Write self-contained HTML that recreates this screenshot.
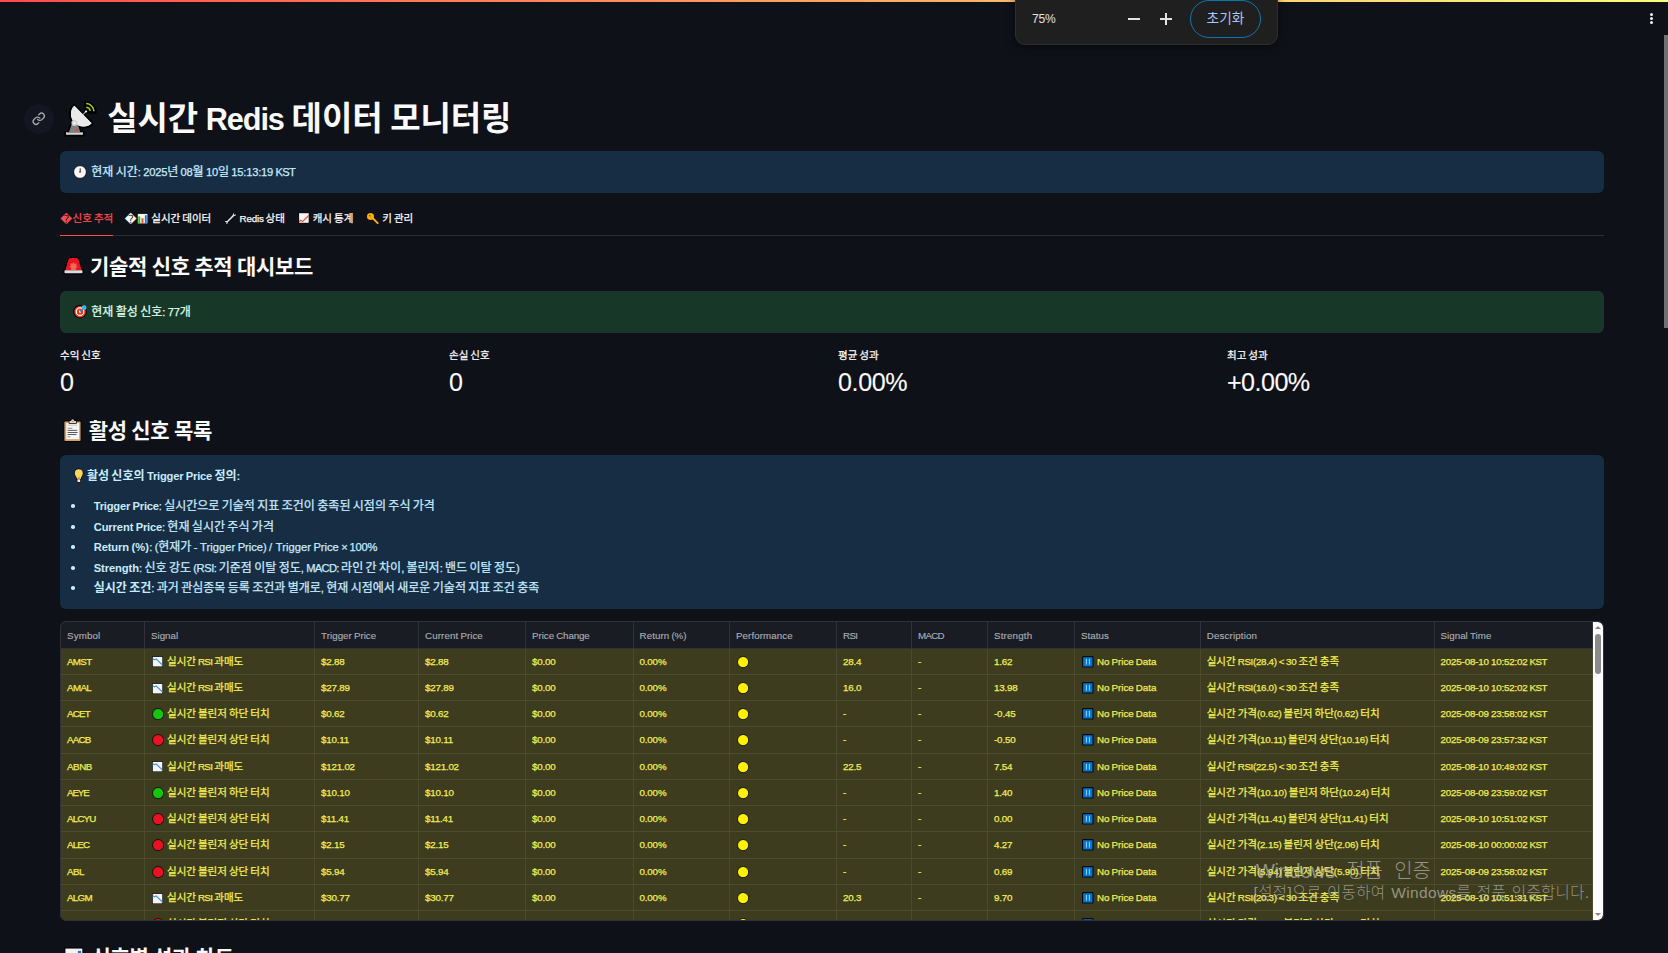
<!DOCTYPE html>
<html lang="ko"><head><meta charset="utf-8"><title>실시간 Redis 데이터 모니터링</title>
<style>
*{box-sizing:border-box;margin:0;padding:0}
html,body{width:1668px;height:953px;overflow:hidden;background:#0e1117}
body{position:relative;word-spacing:-.078em;-webkit-text-stroke:.25px currentColor;color:#fafafa;font-family:"Liberation Sans","Noto Sans CJK KR",sans-serif;font-size:12px;-webkit-font-smoothing:antialiased}
.abs{position:absolute;white-space:nowrap}
.l{font-size:.93em;word-spacing:0}
svg.ic{position:relative;display:inline-block;vertical-align:middle;overflow:visible}
svg.at{position:absolute;display:block;overflow:visible}
.t12{font-size:12px;line-height:18px}
.q{font-family:"DejaVu Sans",sans-serif;font-size:11.500px;line-height:10px;position:relative;top:1.100px;margin-left:.3px;margin-right:.5px;-webkit-text-stroke:0}
#topbar{position:absolute;left:0;top:0;width:1668px;height:2px;background:linear-gradient(90deg,#ff4b4b 0%,#fffd80 100%)}
#zoom{position:absolute;left:1015px;top:-10px;width:263px;height:54.800px;background:#1f1f1f;border:1px solid #2e2e2e;border-radius:10px;box-shadow:0 2px 8px rgba(0,0,0,.5);-webkit-text-stroke:0;word-spacing:0}
#zoom .pct{position:absolute;left:16px;top:10.400px;height:37px;line-height:37px;font-size:12px;color:#e3e3e3;letter-spacing:-.2px}
#zoom .minus{position:absolute;left:112px;top:27.100px;width:12.200px;height:1.600px;background:#e3e3e3}
#zoom .plusH{position:absolute;left:144.100px;top:27.100px;width:12.200px;height:1.600px;background:#e3e3e3}
#zoom .plusV{position:absolute;left:149.400px;top:21.800px;width:1.600px;height:12.200px;background:#e3e3e3}
#zoom .btn{position:absolute;left:174.200px;top:9.300px;width:70.600px;height:37.600px;border:1.500px solid #0a78b0;border-radius:19px;color:#a8c7fa;font-size:13.700px;line-height:36.300px;text-align:center}
#menu i{position:absolute;left:1650px;width:3px;height:3px;border-radius:50%;background:#f0f0f0}
#scroll{position:absolute;left:1664px;top:35px;width:4px;height:292.500px;background:#707175}
#link{position:absolute;left:24px;top:104px;width:30px;height:30px;border-radius:50%;background:#141721}
h1{-webkit-text-stroke:0;position:absolute;left:107.200px;top:98px;font-size:33px;line-height:42px;font-weight:700;white-space:nowrap;word-spacing:-.04em;letter-spacing:-.08px}
h3{position:absolute;font-size:21px;line-height:28px;font-weight:700;white-space:nowrap;letter-spacing:-.3px;-webkit-text-stroke:0}
.box{position:absolute;left:60px;width:1544px;border-radius:6px}
.info{background:#172d43;color:#c7ebff}
.succ{background:#173828;color:#dffde9}
.tab{position:absolute;top:210px;height:16px;line-height:16px;font-size:10.5px;white-space:nowrap}
#tabline{position:absolute;left:60px;top:235px;width:1544px;height:1px;background:#2b2d34}
#tabred{position:absolute;left:60px;top:234.600px;width:53px;height:1.500px;background:#ff4b4b}
.ml{position:absolute;top:348px;font-size:10.5px;line-height:14px;white-space:nowrap}
.mv{position:absolute;top:367.400px;font-size:27px;line-height:30px;white-space:nowrap;-webkit-text-stroke:.1px currentColor}
ul{list-style:none}
.li{position:absolute;left:93.700px;height:20px;line-height:20px;white-space:nowrap}
.dot{position:absolute;left:71px;width:3.600px;height:3.600px;border-radius:50%;background:#c7ebff}
b{font-weight:700;-webkit-text-stroke:0}
/* table */
#tbl{position:absolute;left:60px;top:621px;width:1544px;height:300px;border:1px solid #30323a;border-radius:6px;overflow:hidden;background:#3d3c1f}
#tbl .in{position:absolute;left:0;top:0;width:1542px;height:298px;overflow:hidden}
.tr{position:absolute;left:0;width:1533px;height:26.250px;border-bottom:1px solid #4d4c30;color:#f2ee52;font-size:10.500px}
.tr.th{background:#1a1c24;color:#adafb4;border-bottom:1px solid #30323a}
.c{position:absolute;top:0;height:100%;line-height:25.600px;padding-left:6px;border-right:1px solid #4b4a2e;white-space:nowrap;overflow:hidden}
.th .c{border-right:1px solid #30323a;line-height:26.300px;-webkit-text-stroke:.12px currentColor}
.ei{display:inline-block;width:16px;vertical-align:top}
.ei svg{left:1px;top:-1.800px}
#vs{position:absolute;left:1531.800px;top:0;width:10.400px;height:298px;background:#fcfcfc;border-radius:0 5.500px 5.500px 0}
#vs .thumb{position:absolute;left:2.300px;top:11.900px;width:5.900px;height:40px;border-radius:3px;background:#8b8b8b}
#vs .au{position:absolute;left:2.100px;top:4px;width:0;height:0;border-left:3.100px solid transparent;border-right:3.100px solid transparent;border-bottom:3.300px solid #858585}
#vs .ad{position:absolute;left:2.100px;top:291px;width:0;height:0;border-left:3.100px solid transparent;border-right:3.100px solid transparent;border-top:3.300px solid #858585}
.wm{position:absolute;color:rgba(195,195,190,.66);white-space:nowrap;font-weight:300;-webkit-text-stroke:0}
.wm .l{font-size:1em}

</style></head>
<body>
<div id="topbar"></div>
<div id="zoom"><span class="pct">75%</span><i class="minus"></i><i class="plusH"></i><i class="plusV"></i><div class="btn">초기화</div></div>
<div id="menu"><i style="top:13.300px"></i><i style="top:17.100px"></i><i style="top:20.900px"></i></div>
<div id="scroll"></div>
<div id="link"></div><svg class="at" width="13.5" height="13.5" viewBox="0 0 13.5 13.5" style="left:32.0px;top:112.0px"><g transform="scale(.5625)" fill="none" stroke="#a6a8ae" stroke-width="2.300" stroke-linecap="round" stroke-linejoin="round"><path d="M10 13a5 5 0 0 0 7.540.540l3-3a5 5 0 0 0-7.070-7.070l-1.720 1.710"/><path d="M14 11a5 5 0 0 0-7.540-.540l-3 3a5 5 0 0 0 7.070 7.070l1.710-1.710"/></g></svg>
<svg class="at" width="33" height="36" viewBox="0 0 33 36" style="left:64.0px;top:101.0px"><path d="M21.600 11.200L21.200 1A9.800 9.800 0 0 1 31.600 11.600z" fill="#000" stroke="#000" stroke-width="2.200" stroke-linejoin="round"/><g stroke="#000" stroke-width="4" stroke-linejoin="round" paint-order="stroke"><rect x="2.200" y="31.400" width="16.500" height="2.200" fill="#d6d6d6"/><path d="M7.700 23.700h6.400l1.900 7.700H5z" fill="#7f7f7f"/><path d="M10.300 4.800A12.300 11.600 45 0 0 27.600 22.300z" fill="#e9e9e9"/></g><rect x="2.200" y="31.400" width="16.500" height="2.200" fill="#d6d6d6"/><path d="M7.700 23.700h6.400l1.900 7.700H5z" fill="#7f7f7f"/><path d="M10.300 4.800A12.300 11.600 45 0 0 27.600 22.300z" fill="#e9e9e9"/><circle cx="10.400" cy="22" r="3" fill="#d2d2d2"/><circle cx="10.400" cy="22" r="1.200" fill="#f4f4f4"/><path d="M19 13.400l3-2.900" stroke="#f2f2f2" stroke-width="1"/><circle cx="22" cy="10.500" r="1.100" fill="#f6f6f6"/><rect x="11.700" y="28" width="2" height="2" fill="#ff3b1f"/><g fill="none" stroke="#b4d200" stroke-width="1.500"><path d="M22.300 6.200a4.300 4.300 0 0 1 3.900 3.600"/><path d="M22.300 2.600a8 8 0 0 1 7.600 7.600"/></g></svg>
<h1>실시간 <span class="l"><span style="letter-spacing:-1.11px">Redis</span></span> 데이터 모니터링</h1>

<div class="box info" style="top:151px;height:42px"></div>
<svg class="at" width="14" height="14" viewBox="0 0 14 14" style="left:73.2px;top:164.8px"><circle cx="7" cy="7" r="6.400" fill="#fbfbfb" stroke="#05070a" stroke-width=".9"/><path d="M7.200 6.500V3.700" stroke="#3a3f44" stroke-width="1.150" stroke-linecap="round"/><circle cx="7" cy="6.900" r=".95" fill="#f0182a"/></svg>
<div class="abs t12" style="left:91.300px;top:163.100px;color:#c7ebff">현재 시간<span class="l"><span style="letter-spacing:-0.11px">:</span><span style="letter-spacing:-0.70px"> </span><span style="letter-spacing:-0.24px">2025</span></span>년 <span class="l"><span style="letter-spacing:-0.24px">08</span></span>월 <span class="l"><span style="letter-spacing:-0.24px">10</span></span>일 <span class="l"><span style="letter-spacing:-0.21px">15:13:19</span><span style="letter-spacing:-0.70px"> </span><span style="letter-spacing:-0.64px">KST</span></span></div>

<div class="tab" style="left:60px;color:#ff4b4b"><span class="q">&#xFFFD;</span>신호 추적</div>
<div class="tab" style="left:124.500px"><span class="q">&#xFFFD;</span></div><svg class="at" width="11" height="11.1" viewBox="0 0 11 11.1" style="left:136.5px;top:212.5px"><rect x="0" y="0" width="11" height="11.100" rx=".9" fill="#06080c"/><rect x=".8" y=".9" width="9.600" height="9.500" fill="#f4f4f4"/><rect x="1.300" y="3.400" width="1.900" height="7" fill="#16c60c"/><rect x="4.500" y="5.200" width="1.900" height="5.200" fill="#f25530"/><rect x="7.900" y="2.200" width="1.800" height="8.200" fill="#0a78dc"/></svg>
<div class="tab" style="left:151.300px">실시간 데이터</div>
<svg class="at" width="11" height="11" viewBox="0 0 11 11" style="left:224.8px;top:212.8px"><g fill="none" stroke-linecap="round" stroke-linejoin="round"><g stroke="#05070a"><path d="M2.300 8.700L8.400 2.600" stroke-width="2.700"/><path d="M8.500.700L8.300 2.700 10.500 1.900M.400 8.500L2.400 8.600 1.800 10.700" stroke-width="2.200"/></g><g stroke="#e2e2e2"><path d="M2.300 8.700L8.400 2.600" stroke-width="1.500"/><path d="M8.500.700L8.300 2.700 10.500 1.900M.400 8.500L2.400 8.600 1.800 10.700" stroke-width="1.100"/></g></g></svg><div class="tab" style="left:239.600px"><span class="l"><span style="letter-spacing:-0.19px">Redis</span></span> 상태</div>
<svg class="at" width="11.5" height="11.9" viewBox="0 0 11.5 11.9" style="left:298.1px;top:212.1px"><rect x=".4" y=".4" width="10.700" height="11.100" rx=".9" fill="#06080c"/><rect x="1.100" y="1.200" width="9.600" height="9.600" fill="#f6f6f6"/><path d="M1.100 9.700l1.700-1.500 1.700 1.400 6.200-6.100" fill="none" stroke="#f0502f" stroke-width="1.200" stroke-linejoin="round"/></svg><div class="tab" style="left:312.700px">캐시 통계</div>
<svg class="at" width="11.5" height="11.5" viewBox="0 0 11.5 11.5" style="left:367.0px;top:212.7px"><g stroke="#06080c" stroke-width="1" paint-order="stroke"><path d="M5.300 4.700L10.900 10.300" stroke="#06080c" stroke-width="3" stroke-linecap="round"/><circle cx="3.500" cy="3.500" r="3.300" fill="#ffb000"/></g><path d="M5.300 4.700L10.700 10.100" stroke="#ffb000" stroke-width="2" stroke-linecap="round"/><circle cx="3.500" cy="3.500" r="3.300" fill="#ffb000"/><ellipse cx="2.900" cy="2.800" rx=".8" ry=".55" fill="#0b0d12"/></svg><div class="tab" style="left:382.300px">키 관리</div>
<div id="tabline"></div><div id="tabred"></div>

<svg class="at" width="21" height="19" viewBox="0 0 21 19" style="left:62.5px;top:256.4px"><g stroke="#000" stroke-width="2.400" stroke-linejoin="round" fill="#000"><path d="M2.300 14.300L5.400 3.700Q6 2 7.800 2h5.400q1.800 0 2.400 1.700l3.100 10.600z"/><rect x="1.500" y="14.200" width="18" height="3.100" rx=".7"/></g><path d="M2.300 14.300L5.400 3.700Q6 2 7.800 2h5.400q1.800 0 2.400 1.700l3.100 10.600z" fill="#ea1324"/><rect x="1.500" y="14.200" width="18" height="3.100" rx=".7" fill="#dcdcdc"/><path d="M10.500 5.900l1.100 1.900 2.200-.3-.7 2.100 1.700 1.300-1.900.9.100 2.400h-5l.1-2.400-1.900-.9 1.700-1.300-.7-2.100 2.200.3z" fill="#ee6a50"/></svg>
<h3 style="left:90px;top:253px">기술적 신호 추적 대시보드</h3>

<div class="box succ" style="top:291px;height:42px"></div>
<svg class="at" width="14.7" height="14.7" viewBox="0 0 14 14" style="left:72.9px;top:304.0px"><circle cx="6.700" cy="7.300" r="6" fill="#f03a17" stroke="#050505" stroke-width="1.100"/><circle cx="6.700" cy="7.300" r="3.600" fill="none" stroke="#fff" stroke-width="1.100"/><circle cx="6.700" cy="7.300" r="1" fill="#fff"/><path d="M6.800 7.200l3-3" stroke="#1e86e5" stroke-width="1.100"/><circle cx="10.500" cy="3.500" r="2.300" fill="#38c6f6"/><path d="M9.200 4.800l2.300-2.300" stroke="#1e86e5" stroke-width=".9"/></svg>
<div class="abs t12" style="left:91.300px;top:303.100px;color:#dffde9">현재 활성 신호<span class="l"><span style="letter-spacing:-0.11px">:</span><span style="letter-spacing:-0.70px"> </span><span style="letter-spacing:-0.24px">77</span></span>개</div>

<div class="ml" style="left:60px">수익 신호</div><div class="mv" style="left:60px"><span class="l"><span style="letter-spacing:-0.55px">0</span></span></div>
<div class="ml" style="left:449px">손실 신호</div><div class="mv" style="left:449px"><span class="l"><span style="letter-spacing:-0.55px">0</span></span></div>
<div class="ml" style="left:838px">평균 성과</div><div class="mv" style="left:838px"><span class="l"><span style="letter-spacing:-0.39px">0.00%</span></span></div>
<div class="ml" style="left:1227px">최고 성과</div><div class="mv" style="left:1227px"><span class="l"><span style="letter-spacing:-0.54px">+0.00%</span></span></div>

<svg class="at" width="19" height="24" viewBox="0 0 19 24" style="left:62.7px;top:418.4px"><rect x="1.400" y="3.400" width="16.200" height="19.500" rx="1" fill="#d7a066" stroke="#000" stroke-width="1.600" paint-order="stroke"/><rect x="3.200" y="5" width="13" height="16.200" fill="#f6f6f6"/><path d="M6.400 5V3.500q0-.5.500-.5h1.200q.2-1.700 1.600-1.700t1.600 1.700h1.200q.5 0 .5.500V5z" fill="#d9d9d9" stroke="#000" stroke-width="1.400" paint-order="stroke"/><circle cx="9.700" cy="3.500" r=".8" fill="#e08a2a"/><path d="M4.600 7.200h9.800" stroke="#d0d0d0" stroke-width="1.300"/><path d="M4.600 10.300h4.800" stroke="#9a9a9a" stroke-width="1.100"/><path d="M4.600 12.400h9.500M4.600 14.500h10M4.600 16.500h8.800" stroke="#4a4a4a" stroke-width=".9"/><path d="M4.600 18.700h2.800" stroke="#9a9a9a" stroke-width="1.100"/></svg>
<h3 style="left:88.700px;top:417.100px">활성 신호 목록</h3>

<div class="box info" style="top:455px;height:154px"></div>
<svg class="at" width="10" height="15" viewBox="0 0 10 15" style="left:73.5px;top:467.8px"><path d="M4.800 1.200a4 4 0 0 1 4 4c0 1.900-1.200 3-1.900 4.700l-.5 1.500H3.300l-.5-1.500C2.100 8.200.8 7.100.8 5.200a4 4 0 0 1 4-4z" fill="#ffd562" stroke="#04060a" stroke-width="1.300" paint-order="stroke"/><path d="M3.700 8.500h2.200l-.5 3H4.200z" fill="#fdb813"/><rect x="3.400" y="11.300" width="2.800" height="2.600" rx=".5" fill="#e9e9e9" stroke="#04060a" stroke-width="1.200" paint-order="stroke"/></svg>
<div class="abs t12" style="left:86.900px;top:467px;color:#c7ebff"><b>활성 신호의 <span class="l"><span style="letter-spacing:-0.20px">Trigger</span><span style="letter-spacing:-0.62px"> </span><span style="letter-spacing:-0.22px">Price</span></span> 정의<span class="l"><span style="letter-spacing:-0.62px">:</span></span></b></div>
<ul style="color:#c7ebff">
<li><i class="dot" style="top:504.400px"></i><div class="li" style="top:496.200px"><b><span class="l"><span style="letter-spacing:-0.20px">Trigger</span><span style="letter-spacing:-0.62px"> </span><span style="letter-spacing:-0.22px">Price</span></span></b><span class="l"><span style="letter-spacing:-0.11px">:</span></span> 실시간으로 기술적 지표 조건이 충족된 시점의 주식 가격</div></li>
<li><i class="dot" style="top:525px"></i><div class="li" style="top:516.800px"><b><span class="l"><span style="letter-spacing:-0.10px">Current</span><span style="letter-spacing:-0.62px"> </span><span style="letter-spacing:-0.22px">Price</span></span></b><span class="l"><span style="letter-spacing:-0.11px">:</span></span> 현재 실시간 주식 가격</div></li>
<li><i class="dot" style="top:545.200px"></i><div class="li" style="top:537px"><b><span class="l"><span style="letter-spacing:-0.11px">Return</span><span style="letter-spacing:-0.62px"> </span><span style="letter-spacing:0.13px">(%)</span></span></b><span class="l"><span style="letter-spacing:-0.11px">:</span><span style="letter-spacing:-0.70px"> </span><span style="letter-spacing:-0.08px">(</span></span>현재가 <span class="l"><span style="letter-spacing:0.02px">-</span><span style="letter-spacing:-0.70px"> </span><span style="letter-spacing:0.06px">Trigger</span><span style="letter-spacing:-0.70px"> </span><span style="letter-spacing:-0.03px">Price)</span><span style="letter-spacing:-0.70px"> </span><span style="letter-spacing:1.10px">/</span><span style="letter-spacing:-0.70px"> </span><span style="letter-spacing:0.06px">Trigger</span><span style="letter-spacing:-0.70px"> </span><span style="letter-spacing:-0.02px">Price</span><span style="letter-spacing:-0.70px"> </span><span style="letter-spacing:-0.55px">×</span><span style="letter-spacing:-0.70px"> </span><span style="letter-spacing:-0.19px">100%</span></span></div></li>
<li><i class="dot" style="top:566.400px"></i><div class="li" style="top:558.200px"><b><span class="l"><span style="letter-spacing:-0.07px">Strength</span></span></b><span class="l"><span style="letter-spacing:-0.11px">:</span></span> 신호 강도 <span class="l"><span style="letter-spacing:-0.48px">(RSI:</span></span> 기준점 이탈 정도<span class="l"><span style="letter-spacing:-0.11px">,</span><span style="letter-spacing:-0.70px"> </span><span style="letter-spacing:-0.70px">MACD:</span></span> 라인 간 차이<span class="l"><span style="letter-spacing:-0.11px">,</span></span> 볼린저<span class="l"><span style="letter-spacing:-0.11px">:</span></span> 밴드 이탈 정도<span class="l"><span style="letter-spacing:-0.08px">)</span></span></div></li>
<li><i class="dot" style="top:586.200px"></i><div class="li" style="top:578px"><b>실시간 조건</b><span class="l"><span style="letter-spacing:-0.11px">:</span></span> 과거 관심종목 등록 조건과 별개로<span class="l"><span style="letter-spacing:-0.11px">,</span></span> 현재 시점에서 새로운 기술적 지표 조건 충족</div></li>
</ul>

<div id="tbl"><div class="in">
<div class="tr th" style="top:0;height:26.6px"><div class="c " style="left:0px;width:84px"><span class="t"><span class="l"><span style="letter-spacing:0.14px">Symbol</span></span></span></div><div class="c " style="left:84px;width:170px"><span class="t"><span class="l"><span style="letter-spacing:0.01px">Signal</span></span></span></div><div class="c " style="left:254px;width:104px"><span class="t"><span class="l"><span style="letter-spacing:0.05px">Trigger</span><span style="letter-spacing:-0.61px"> </span><span style="letter-spacing:-0.02px">Price</span></span></span></div><div class="c " style="left:358px;width:107px"><span class="t"><span class="l"><span style="letter-spacing:0.13px">Current</span><span style="letter-spacing:-0.61px"> </span><span style="letter-spacing:-0.02px">Price</span></span></span></div><div class="c " style="left:465px;width:107.5px"><span class="t"><span class="l"><span style="letter-spacing:-0.02px">Price</span><span style="letter-spacing:-0.61px"> </span><span style="letter-spacing:-0.16px">Change</span></span></span></div><div class="c " style="left:572.5px;width:96.5px"><span class="t"><span class="l"><span style="letter-spacing:0.09px">Return</span><span style="letter-spacing:-0.61px"> </span><span style="letter-spacing:-0.06px">(%)</span></span></span></div><div class="c " style="left:669px;width:107px"><span class="t"><span class="l"><span style="letter-spacing:0.09px">Performance</span></span></span></div><div class="c " style="left:776px;width:75px"><span class="t"><span class="l"><span style="letter-spacing:-0.65px">RSI</span></span></span></div><div class="c " style="left:851px;width:76px"><span class="t"><span class="l"><span style="letter-spacing:-0.74px">MACD</span></span></span></div><div class="c " style="left:927px;width:87px"><span class="t"><span class="l"><span style="letter-spacing:0.17px">Strength</span></span></span></div><div class="c " style="left:1014px;width:125.70000000000005px"><span class="t"><span class="l"><span style="letter-spacing:0.07px">Status</span></span></span></div><div class="c " style="left:1139.7px;width:233.89999999999986px"><span class="t"><span class="l"><span style="letter-spacing:0.15px">Description</span></span></span></div><div class="c " style="left:1373.6px;width:158.9000000000001px"><span class="t"><span class="l"><span style="letter-spacing:0.01px">Signal</span><span style="letter-spacing:-0.61px"> </span><span style="letter-spacing:0.11px">Time</span></span></span></div></div>
<div class="tr" style="top:26.6px"><div class="c " style="left:0px;width:84px"><span class="t"><span class="l"><span style="letter-spacing:-0.64px">AMST</span></span></span></div><div class="c " style="left:84px;width:170px"><span class="ei"><svg class="ic" width="11" height="11.1" viewBox="0 0 11 11.1" style="left:0.9px;top:0.1px;"><rect x="0" y="0" width="11" height="11.100" rx=".9" fill="#10120c"/><rect x=".8" y=".9" width="9.500" height="9.500" fill="#f4f4f4"/><path d="M.8 2.700l1.700 1.200 1.600-1 6.200 5.900" fill="none" stroke="#2b8de3" stroke-width="1.050" stroke-linejoin="round"/></svg></span><span class="t k k1">실시간 <span class="l"><span style="letter-spacing:-0.65px">RSI</span></span> 과매도</span></div><div class="c " style="left:254px;width:104px"><span class="t"><span class="l"><span style="letter-spacing:-0.19px">$2.88</span></span></span></div><div class="c " style="left:358px;width:107px"><span class="t"><span class="l"><span style="letter-spacing:-0.19px">$2.88</span></span></span></div><div class="c " style="left:465px;width:107.5px"><span class="t"><span class="l"><span style="letter-spacing:-0.19px">$0.00</span></span></span></div><div class="c " style="left:572.5px;width:96.5px"><span class="t"><span class="l"><span style="letter-spacing:-0.15px">0.00%</span></span></span></div><div class="c " style="left:669px;width:107px"><span class="ei p"><svg class="ic" width="12.2" height="12.2" viewBox="0 0 12.2 12.2" style="left:0.9px;top:-0.2px;"><circle cx="6.100" cy="6.100" r="5.600" fill="#fff100" stroke="#0c0f08" stroke-width=".9"/></svg></span></div><div class="c " style="left:776px;width:75px"><span class="t"><span class="l"><span style="letter-spacing:-0.18px">28.4</span></span></span></div><div class="c " style="left:851px;width:76px"><span class="t"><span class="l"><span style="letter-spacing:0.01px">-</span></span></span></div><div class="c " style="left:927px;width:87px"><span class="t"><span class="l"><span style="letter-spacing:-0.18px">1.62</span></span></span></div><div class="c " style="left:1014px;width:125.70000000000005px"><span class="ei s"><svg class="ic" width="11.6" height="11.6" viewBox="0 0 11.6 11.6" style="left:1.1px;top:-0.5px;"><rect x=".6" y=".6" width="10.400" height="10.400" rx=".6" fill="#0078d7" stroke="#06080c" stroke-width="1.100"/><rect x="3.900" y="2.900" width="1" height="5.700" fill="#a5d1f3"/><rect x="6.900" y="2.900" width="1" height="5.700" fill="#a5d1f3"/></svg></span><span class="t"><span class="l"><span style="letter-spacing:0.00px">No</span><span style="letter-spacing:-0.61px"> </span><span style="letter-spacing:-0.02px">Price</span><span style="letter-spacing:-0.61px"> </span><span style="letter-spacing:-0.01px">Data</span></span></span></div><div class="c " style="left:1139.7px;width:233.89999999999986px"><span class="t k">실시간 <span class="l"><span style="letter-spacing:-0.31px">RSI(28.4)</span><span style="letter-spacing:-0.61px"> </span><span style="letter-spacing:-0.48px">&lt;</span><span style="letter-spacing:-0.61px"> </span><span style="letter-spacing:-0.21px">30</span></span> 조건 충족</span></div><div class="c " style="left:1373.6px;width:158.9000000000001px"><span class="t"><span class="l"><span style="letter-spacing:-0.17px">2025-08-10</span><span style="letter-spacing:-0.61px"> </span><span style="letter-spacing:-0.18px">10:52:02</span><span style="letter-spacing:-0.61px"> </span><span style="letter-spacing:-0.56px">KST</span></span></span></div></div>
<div class="tr" style="top:52.85px"><div class="c " style="left:0px;width:84px"><span class="t"><span class="l"><span style="letter-spacing:-0.61px">AMAL</span></span></span></div><div class="c " style="left:84px;width:170px"><span class="ei"><svg class="ic" width="11" height="11.1" viewBox="0 0 11 11.1" style="left:0.9px;top:0.1px;"><rect x="0" y="0" width="11" height="11.100" rx=".9" fill="#10120c"/><rect x=".8" y=".9" width="9.500" height="9.500" fill="#f4f4f4"/><path d="M.8 2.700l1.700 1.200 1.600-1 6.200 5.900" fill="none" stroke="#2b8de3" stroke-width="1.050" stroke-linejoin="round"/></svg></span><span class="t k k1">실시간 <span class="l"><span style="letter-spacing:-0.65px">RSI</span></span> 과매도</span></div><div class="c " style="left:254px;width:104px"><span class="t"><span class="l"><span style="letter-spacing:-0.19px">$27.89</span></span></span></div><div class="c " style="left:358px;width:107px"><span class="t"><span class="l"><span style="letter-spacing:-0.19px">$27.89</span></span></span></div><div class="c " style="left:465px;width:107.5px"><span class="t"><span class="l"><span style="letter-spacing:-0.19px">$0.00</span></span></span></div><div class="c " style="left:572.5px;width:96.5px"><span class="t"><span class="l"><span style="letter-spacing:-0.15px">0.00%</span></span></span></div><div class="c " style="left:669px;width:107px"><span class="ei p"><svg class="ic" width="12.2" height="12.2" viewBox="0 0 12.2 12.2" style="left:0.9px;top:-0.2px;"><circle cx="6.100" cy="6.100" r="5.600" fill="#fff100" stroke="#0c0f08" stroke-width=".9"/></svg></span></div><div class="c " style="left:776px;width:75px"><span class="t"><span class="l"><span style="letter-spacing:-0.18px">16.0</span></span></span></div><div class="c " style="left:851px;width:76px"><span class="t"><span class="l"><span style="letter-spacing:0.01px">-</span></span></span></div><div class="c " style="left:927px;width:87px"><span class="t"><span class="l"><span style="letter-spacing:-0.19px">13.98</span></span></span></div><div class="c " style="left:1014px;width:125.70000000000005px"><span class="ei s"><svg class="ic" width="11.6" height="11.6" viewBox="0 0 11.6 11.6" style="left:1.1px;top:-0.5px;"><rect x=".6" y=".6" width="10.400" height="10.400" rx=".6" fill="#0078d7" stroke="#06080c" stroke-width="1.100"/><rect x="3.900" y="2.900" width="1" height="5.700" fill="#a5d1f3"/><rect x="6.900" y="2.900" width="1" height="5.700" fill="#a5d1f3"/></svg></span><span class="t"><span class="l"><span style="letter-spacing:0.00px">No</span><span style="letter-spacing:-0.61px"> </span><span style="letter-spacing:-0.02px">Price</span><span style="letter-spacing:-0.61px"> </span><span style="letter-spacing:-0.01px">Data</span></span></span></div><div class="c " style="left:1139.7px;width:233.89999999999986px"><span class="t k">실시간 <span class="l"><span style="letter-spacing:-0.31px">RSI(16.0)</span><span style="letter-spacing:-0.61px"> </span><span style="letter-spacing:-0.48px">&lt;</span><span style="letter-spacing:-0.61px"> </span><span style="letter-spacing:-0.21px">30</span></span> 조건 충족</span></div><div class="c " style="left:1373.6px;width:158.9000000000001px"><span class="t"><span class="l"><span style="letter-spacing:-0.17px">2025-08-10</span><span style="letter-spacing:-0.61px"> </span><span style="letter-spacing:-0.18px">10:52:02</span><span style="letter-spacing:-0.61px"> </span><span style="letter-spacing:-0.56px">KST</span></span></span></div></div>
<div class="tr" style="top:79.1px"><div class="c " style="left:0px;width:84px"><span class="t"><span class="l"><span style="letter-spacing:-0.79px">ACET</span></span></span></div><div class="c " style="left:84px;width:170px"><span class="ei"><svg class="ic" width="12.2" height="12.2" viewBox="0 0 12.2 12.2" style="left:0.9px;top:0px;"><circle cx="6.100" cy="6.100" r="5.600" fill="#16c60c" stroke="#0c0f08" stroke-width=".9"/></svg></span><span class="t k k2">실시간 볼린저 하단 터치</span></div><div class="c " style="left:254px;width:104px"><span class="t"><span class="l"><span style="letter-spacing:-0.19px">$0.62</span></span></span></div><div class="c " style="left:358px;width:107px"><span class="t"><span class="l"><span style="letter-spacing:-0.19px">$0.62</span></span></span></div><div class="c " style="left:465px;width:107.5px"><span class="t"><span class="l"><span style="letter-spacing:-0.19px">$0.00</span></span></span></div><div class="c " style="left:572.5px;width:96.5px"><span class="t"><span class="l"><span style="letter-spacing:-0.15px">0.00%</span></span></span></div><div class="c " style="left:669px;width:107px"><span class="ei p"><svg class="ic" width="12.2" height="12.2" viewBox="0 0 12.2 12.2" style="left:0.9px;top:-0.2px;"><circle cx="6.100" cy="6.100" r="5.600" fill="#fff100" stroke="#0c0f08" stroke-width=".9"/></svg></span></div><div class="c " style="left:776px;width:75px"><span class="t"><span class="l"><span style="letter-spacing:0.01px">-</span></span></span></div><div class="c " style="left:851px;width:76px"><span class="t"><span class="l"><span style="letter-spacing:0.01px">-</span></span></span></div><div class="c " style="left:927px;width:87px"><span class="t"><span class="l"><span style="letter-spacing:-0.14px">-0.45</span></span></span></div><div class="c " style="left:1014px;width:125.70000000000005px"><span class="ei s"><svg class="ic" width="11.6" height="11.6" viewBox="0 0 11.6 11.6" style="left:1.1px;top:-0.5px;"><rect x=".6" y=".6" width="10.400" height="10.400" rx=".6" fill="#0078d7" stroke="#06080c" stroke-width="1.100"/><rect x="3.900" y="2.900" width="1" height="5.700" fill="#a5d1f3"/><rect x="6.900" y="2.900" width="1" height="5.700" fill="#a5d1f3"/></svg></span><span class="t"><span class="l"><span style="letter-spacing:0.00px">No</span><span style="letter-spacing:-0.61px"> </span><span style="letter-spacing:-0.02px">Price</span><span style="letter-spacing:-0.61px"> </span><span style="letter-spacing:-0.01px">Data</span></span></span></div><div class="c " style="left:1139.7px;width:233.89999999999986px"><span class="t k">실시간 가격<span class="l"><span style="letter-spacing:-0.15px">(0.62)</span></span> 볼린저 하단<span class="l"><span style="letter-spacing:-0.15px">(0.62)</span></span> 터치</span></div><div class="c " style="left:1373.6px;width:158.9000000000001px"><span class="t"><span class="l"><span style="letter-spacing:-0.17px">2025-08-09</span><span style="letter-spacing:-0.61px"> </span><span style="letter-spacing:-0.18px">23:58:02</span><span style="letter-spacing:-0.61px"> </span><span style="letter-spacing:-0.56px">KST</span></span></span></div></div>
<div class="tr" style="top:105.35px"><div class="c " style="left:0px;width:84px"><span class="t"><span class="l"><span style="letter-spacing:-0.75px">AACB</span></span></span></div><div class="c " style="left:84px;width:170px"><span class="ei"><svg class="ic" width="12.2" height="12.2" viewBox="0 0 12.2 12.2" style="left:0.9px;top:0px;"><circle cx="6.100" cy="6.100" r="5.600" fill="#e81224" stroke="#0c0f08" stroke-width=".9"/></svg></span><span class="t k k2">실시간 볼린저 상단 터치</span></div><div class="c " style="left:254px;width:104px"><span class="t"><span class="l"><span style="letter-spacing:-0.19px">$10.11</span></span></span></div><div class="c " style="left:358px;width:107px"><span class="t"><span class="l"><span style="letter-spacing:-0.19px">$10.11</span></span></span></div><div class="c " style="left:465px;width:107.5px"><span class="t"><span class="l"><span style="letter-spacing:-0.19px">$0.00</span></span></span></div><div class="c " style="left:572.5px;width:96.5px"><span class="t"><span class="l"><span style="letter-spacing:-0.15px">0.00%</span></span></span></div><div class="c " style="left:669px;width:107px"><span class="ei p"><svg class="ic" width="12.2" height="12.2" viewBox="0 0 12.2 12.2" style="left:0.9px;top:-0.2px;"><circle cx="6.100" cy="6.100" r="5.600" fill="#fff100" stroke="#0c0f08" stroke-width=".9"/></svg></span></div><div class="c " style="left:776px;width:75px"><span class="t"><span class="l"><span style="letter-spacing:0.01px">-</span></span></span></div><div class="c " style="left:851px;width:76px"><span class="t"><span class="l"><span style="letter-spacing:0.01px">-</span></span></span></div><div class="c " style="left:927px;width:87px"><span class="t"><span class="l"><span style="letter-spacing:-0.14px">-0.50</span></span></span></div><div class="c " style="left:1014px;width:125.70000000000005px"><span class="ei s"><svg class="ic" width="11.6" height="11.6" viewBox="0 0 11.6 11.6" style="left:1.1px;top:-0.5px;"><rect x=".6" y=".6" width="10.400" height="10.400" rx=".6" fill="#0078d7" stroke="#06080c" stroke-width="1.100"/><rect x="3.900" y="2.900" width="1" height="5.700" fill="#a5d1f3"/><rect x="6.900" y="2.900" width="1" height="5.700" fill="#a5d1f3"/></svg></span><span class="t"><span class="l"><span style="letter-spacing:0.00px">No</span><span style="letter-spacing:-0.61px"> </span><span style="letter-spacing:-0.02px">Price</span><span style="letter-spacing:-0.61px"> </span><span style="letter-spacing:-0.01px">Data</span></span></span></div><div class="c " style="left:1139.7px;width:233.89999999999986px"><span class="t k">실시간 가격<span class="l"><span style="letter-spacing:-0.16px">(10.11)</span></span> 볼린저 상단<span class="l"><span style="letter-spacing:-0.16px">(10.16)</span></span> 터치</span></div><div class="c " style="left:1373.6px;width:158.9000000000001px"><span class="t"><span class="l"><span style="letter-spacing:-0.17px">2025-08-09</span><span style="letter-spacing:-0.61px"> </span><span style="letter-spacing:-0.18px">23:57:32</span><span style="letter-spacing:-0.61px"> </span><span style="letter-spacing:-0.56px">KST</span></span></span></div></div>
<div class="tr" style="top:131.6px"><div class="c " style="left:0px;width:84px"><span class="t"><span class="l"><span style="letter-spacing:-0.43px">ABNB</span></span></span></div><div class="c " style="left:84px;width:170px"><span class="ei"><svg class="ic" width="11" height="11.1" viewBox="0 0 11 11.1" style="left:0.9px;top:0.1px;"><rect x="0" y="0" width="11" height="11.100" rx=".9" fill="#10120c"/><rect x=".8" y=".9" width="9.500" height="9.500" fill="#f4f4f4"/><path d="M.8 2.700l1.700 1.200 1.600-1 6.200 5.900" fill="none" stroke="#2b8de3" stroke-width="1.050" stroke-linejoin="round"/></svg></span><span class="t k k1">실시간 <span class="l"><span style="letter-spacing:-0.65px">RSI</span></span> 과매도</span></div><div class="c " style="left:254px;width:104px"><span class="t"><span class="l"><span style="letter-spacing:-0.20px">$121.02</span></span></span></div><div class="c " style="left:358px;width:107px"><span class="t"><span class="l"><span style="letter-spacing:-0.20px">$121.02</span></span></span></div><div class="c " style="left:465px;width:107.5px"><span class="t"><span class="l"><span style="letter-spacing:-0.19px">$0.00</span></span></span></div><div class="c " style="left:572.5px;width:96.5px"><span class="t"><span class="l"><span style="letter-spacing:-0.15px">0.00%</span></span></span></div><div class="c " style="left:669px;width:107px"><span class="ei p"><svg class="ic" width="12.2" height="12.2" viewBox="0 0 12.2 12.2" style="left:0.9px;top:-0.2px;"><circle cx="6.100" cy="6.100" r="5.600" fill="#fff100" stroke="#0c0f08" stroke-width=".9"/></svg></span></div><div class="c " style="left:776px;width:75px"><span class="t"><span class="l"><span style="letter-spacing:-0.18px">22.5</span></span></span></div><div class="c " style="left:851px;width:76px"><span class="t"><span class="l"><span style="letter-spacing:0.01px">-</span></span></span></div><div class="c " style="left:927px;width:87px"><span class="t"><span class="l"><span style="letter-spacing:-0.18px">7.54</span></span></span></div><div class="c " style="left:1014px;width:125.70000000000005px"><span class="ei s"><svg class="ic" width="11.6" height="11.6" viewBox="0 0 11.6 11.6" style="left:1.1px;top:-0.5px;"><rect x=".6" y=".6" width="10.400" height="10.400" rx=".6" fill="#0078d7" stroke="#06080c" stroke-width="1.100"/><rect x="3.900" y="2.900" width="1" height="5.700" fill="#a5d1f3"/><rect x="6.900" y="2.900" width="1" height="5.700" fill="#a5d1f3"/></svg></span><span class="t"><span class="l"><span style="letter-spacing:0.00px">No</span><span style="letter-spacing:-0.61px"> </span><span style="letter-spacing:-0.02px">Price</span><span style="letter-spacing:-0.61px"> </span><span style="letter-spacing:-0.01px">Data</span></span></span></div><div class="c " style="left:1139.7px;width:233.89999999999986px"><span class="t k">실시간 <span class="l"><span style="letter-spacing:-0.31px">RSI(22.5)</span><span style="letter-spacing:-0.61px"> </span><span style="letter-spacing:-0.48px">&lt;</span><span style="letter-spacing:-0.61px"> </span><span style="letter-spacing:-0.21px">30</span></span> 조건 충족</span></div><div class="c " style="left:1373.6px;width:158.9000000000001px"><span class="t"><span class="l"><span style="letter-spacing:-0.17px">2025-08-10</span><span style="letter-spacing:-0.61px"> </span><span style="letter-spacing:-0.18px">10:49:02</span><span style="letter-spacing:-0.61px"> </span><span style="letter-spacing:-0.56px">KST</span></span></span></div></div>
<div class="tr" style="top:157.85px"><div class="c " style="left:0px;width:84px"><span class="t"><span class="l"><span style="letter-spacing:-1.07px">AEYE</span></span></span></div><div class="c " style="left:84px;width:170px"><span class="ei"><svg class="ic" width="12.2" height="12.2" viewBox="0 0 12.2 12.2" style="left:0.9px;top:0px;"><circle cx="6.100" cy="6.100" r="5.600" fill="#16c60c" stroke="#0c0f08" stroke-width=".9"/></svg></span><span class="t k k2">실시간 볼린저 하단 터치</span></div><div class="c " style="left:254px;width:104px"><span class="t"><span class="l"><span style="letter-spacing:-0.19px">$10.10</span></span></span></div><div class="c " style="left:358px;width:107px"><span class="t"><span class="l"><span style="letter-spacing:-0.19px">$10.10</span></span></span></div><div class="c " style="left:465px;width:107.5px"><span class="t"><span class="l"><span style="letter-spacing:-0.19px">$0.00</span></span></span></div><div class="c " style="left:572.5px;width:96.5px"><span class="t"><span class="l"><span style="letter-spacing:-0.15px">0.00%</span></span></span></div><div class="c " style="left:669px;width:107px"><span class="ei p"><svg class="ic" width="12.2" height="12.2" viewBox="0 0 12.2 12.2" style="left:0.9px;top:-0.2px;"><circle cx="6.100" cy="6.100" r="5.600" fill="#fff100" stroke="#0c0f08" stroke-width=".9"/></svg></span></div><div class="c " style="left:776px;width:75px"><span class="t"><span class="l"><span style="letter-spacing:0.01px">-</span></span></span></div><div class="c " style="left:851px;width:76px"><span class="t"><span class="l"><span style="letter-spacing:0.01px">-</span></span></span></div><div class="c " style="left:927px;width:87px"><span class="t"><span class="l"><span style="letter-spacing:-0.18px">1.40</span></span></span></div><div class="c " style="left:1014px;width:125.70000000000005px"><span class="ei s"><svg class="ic" width="11.6" height="11.6" viewBox="0 0 11.6 11.6" style="left:1.1px;top:-0.5px;"><rect x=".6" y=".6" width="10.400" height="10.400" rx=".6" fill="#0078d7" stroke="#06080c" stroke-width="1.100"/><rect x="3.900" y="2.900" width="1" height="5.700" fill="#a5d1f3"/><rect x="6.900" y="2.900" width="1" height="5.700" fill="#a5d1f3"/></svg></span><span class="t"><span class="l"><span style="letter-spacing:0.00px">No</span><span style="letter-spacing:-0.61px"> </span><span style="letter-spacing:-0.02px">Price</span><span style="letter-spacing:-0.61px"> </span><span style="letter-spacing:-0.01px">Data</span></span></span></div><div class="c " style="left:1139.7px;width:233.89999999999986px"><span class="t k">실시간 가격<span class="l"><span style="letter-spacing:-0.16px">(10.10)</span></span> 볼린저 하단<span class="l"><span style="letter-spacing:-0.16px">(10.24)</span></span> 터치</span></div><div class="c " style="left:1373.6px;width:158.9000000000001px"><span class="t"><span class="l"><span style="letter-spacing:-0.17px">2025-08-09</span><span style="letter-spacing:-0.61px"> </span><span style="letter-spacing:-0.18px">23:59:02</span><span style="letter-spacing:-0.61px"> </span><span style="letter-spacing:-0.56px">KST</span></span></span></div></div>
<div class="tr" style="top:184.1px"><div class="c " style="left:0px;width:84px"><span class="t"><span class="l"><span style="letter-spacing:-0.80px">ALCYU</span></span></span></div><div class="c " style="left:84px;width:170px"><span class="ei"><svg class="ic" width="12.2" height="12.2" viewBox="0 0 12.2 12.2" style="left:0.9px;top:0px;"><circle cx="6.100" cy="6.100" r="5.600" fill="#e81224" stroke="#0c0f08" stroke-width=".9"/></svg></span><span class="t k k2">실시간 볼린저 상단 터치</span></div><div class="c " style="left:254px;width:104px"><span class="t"><span class="l"><span style="letter-spacing:-0.19px">$11.41</span></span></span></div><div class="c " style="left:358px;width:107px"><span class="t"><span class="l"><span style="letter-spacing:-0.19px">$11.41</span></span></span></div><div class="c " style="left:465px;width:107.5px"><span class="t"><span class="l"><span style="letter-spacing:-0.19px">$0.00</span></span></span></div><div class="c " style="left:572.5px;width:96.5px"><span class="t"><span class="l"><span style="letter-spacing:-0.15px">0.00%</span></span></span></div><div class="c " style="left:669px;width:107px"><span class="ei p"><svg class="ic" width="12.2" height="12.2" viewBox="0 0 12.2 12.2" style="left:0.9px;top:-0.2px;"><circle cx="6.100" cy="6.100" r="5.600" fill="#fff100" stroke="#0c0f08" stroke-width=".9"/></svg></span></div><div class="c " style="left:776px;width:75px"><span class="t"><span class="l"><span style="letter-spacing:0.01px">-</span></span></span></div><div class="c " style="left:851px;width:76px"><span class="t"><span class="l"><span style="letter-spacing:0.01px">-</span></span></span></div><div class="c " style="left:927px;width:87px"><span class="t"><span class="l"><span style="letter-spacing:-0.18px">0.00</span></span></span></div><div class="c " style="left:1014px;width:125.70000000000005px"><span class="ei s"><svg class="ic" width="11.6" height="11.6" viewBox="0 0 11.6 11.6" style="left:1.1px;top:-0.5px;"><rect x=".6" y=".6" width="10.400" height="10.400" rx=".6" fill="#0078d7" stroke="#06080c" stroke-width="1.100"/><rect x="3.900" y="2.900" width="1" height="5.700" fill="#a5d1f3"/><rect x="6.900" y="2.900" width="1" height="5.700" fill="#a5d1f3"/></svg></span><span class="t"><span class="l"><span style="letter-spacing:0.00px">No</span><span style="letter-spacing:-0.61px"> </span><span style="letter-spacing:-0.02px">Price</span><span style="letter-spacing:-0.61px"> </span><span style="letter-spacing:-0.01px">Data</span></span></span></div><div class="c " style="left:1139.7px;width:233.89999999999986px"><span class="t k">실시간 가격<span class="l"><span style="letter-spacing:-0.16px">(11.41)</span></span> 볼린저 상단<span class="l"><span style="letter-spacing:-0.16px">(11.41)</span></span> 터치</span></div><div class="c " style="left:1373.6px;width:158.9000000000001px"><span class="t"><span class="l"><span style="letter-spacing:-0.17px">2025-08-10</span><span style="letter-spacing:-0.61px"> </span><span style="letter-spacing:-0.18px">10:51:02</span><span style="letter-spacing:-0.61px"> </span><span style="letter-spacing:-0.56px">KST</span></span></span></div></div>
<div class="tr" style="top:210.35px"><div class="c " style="left:0px;width:84px"><span class="t"><span class="l"><span style="letter-spacing:-0.79px">ALEC</span></span></span></div><div class="c " style="left:84px;width:170px"><span class="ei"><svg class="ic" width="12.2" height="12.2" viewBox="0 0 12.2 12.2" style="left:0.9px;top:0px;"><circle cx="6.100" cy="6.100" r="5.600" fill="#e81224" stroke="#0c0f08" stroke-width=".9"/></svg></span><span class="t k k2">실시간 볼린저 상단 터치</span></div><div class="c " style="left:254px;width:104px"><span class="t"><span class="l"><span style="letter-spacing:-0.19px">$2.15</span></span></span></div><div class="c " style="left:358px;width:107px"><span class="t"><span class="l"><span style="letter-spacing:-0.19px">$2.15</span></span></span></div><div class="c " style="left:465px;width:107.5px"><span class="t"><span class="l"><span style="letter-spacing:-0.19px">$0.00</span></span></span></div><div class="c " style="left:572.5px;width:96.5px"><span class="t"><span class="l"><span style="letter-spacing:-0.15px">0.00%</span></span></span></div><div class="c " style="left:669px;width:107px"><span class="ei p"><svg class="ic" width="12.2" height="12.2" viewBox="0 0 12.2 12.2" style="left:0.9px;top:-0.2px;"><circle cx="6.100" cy="6.100" r="5.600" fill="#fff100" stroke="#0c0f08" stroke-width=".9"/></svg></span></div><div class="c " style="left:776px;width:75px"><span class="t"><span class="l"><span style="letter-spacing:0.01px">-</span></span></span></div><div class="c " style="left:851px;width:76px"><span class="t"><span class="l"><span style="letter-spacing:0.01px">-</span></span></span></div><div class="c " style="left:927px;width:87px"><span class="t"><span class="l"><span style="letter-spacing:-0.18px">4.27</span></span></span></div><div class="c " style="left:1014px;width:125.70000000000005px"><span class="ei s"><svg class="ic" width="11.6" height="11.6" viewBox="0 0 11.6 11.6" style="left:1.1px;top:-0.5px;"><rect x=".6" y=".6" width="10.400" height="10.400" rx=".6" fill="#0078d7" stroke="#06080c" stroke-width="1.100"/><rect x="3.900" y="2.900" width="1" height="5.700" fill="#a5d1f3"/><rect x="6.900" y="2.900" width="1" height="5.700" fill="#a5d1f3"/></svg></span><span class="t"><span class="l"><span style="letter-spacing:0.00px">No</span><span style="letter-spacing:-0.61px"> </span><span style="letter-spacing:-0.02px">Price</span><span style="letter-spacing:-0.61px"> </span><span style="letter-spacing:-0.01px">Data</span></span></span></div><div class="c " style="left:1139.7px;width:233.89999999999986px"><span class="t k">실시간 가격<span class="l"><span style="letter-spacing:-0.15px">(2.15)</span></span> 볼린저 상단<span class="l"><span style="letter-spacing:-0.15px">(2.06)</span></span> 터치</span></div><div class="c " style="left:1373.6px;width:158.9000000000001px"><span class="t"><span class="l"><span style="letter-spacing:-0.17px">2025-08-10</span><span style="letter-spacing:-0.61px"> </span><span style="letter-spacing:-0.18px">00:00:02</span><span style="letter-spacing:-0.61px"> </span><span style="letter-spacing:-0.56px">KST</span></span></span></div></div>
<div class="tr" style="top:236.6px"><div class="c " style="left:0px;width:84px"><span class="t"><span class="l"><span style="letter-spacing:-0.49px">ABL</span></span></span></div><div class="c " style="left:84px;width:170px"><span class="ei"><svg class="ic" width="12.2" height="12.2" viewBox="0 0 12.2 12.2" style="left:0.9px;top:0px;"><circle cx="6.100" cy="6.100" r="5.600" fill="#e81224" stroke="#0c0f08" stroke-width=".9"/></svg></span><span class="t k k2">실시간 볼린저 상단 터치</span></div><div class="c " style="left:254px;width:104px"><span class="t"><span class="l"><span style="letter-spacing:-0.19px">$5.94</span></span></span></div><div class="c " style="left:358px;width:107px"><span class="t"><span class="l"><span style="letter-spacing:-0.19px">$5.94</span></span></span></div><div class="c " style="left:465px;width:107.5px"><span class="t"><span class="l"><span style="letter-spacing:-0.19px">$0.00</span></span></span></div><div class="c " style="left:572.5px;width:96.5px"><span class="t"><span class="l"><span style="letter-spacing:-0.15px">0.00%</span></span></span></div><div class="c " style="left:669px;width:107px"><span class="ei p"><svg class="ic" width="12.2" height="12.2" viewBox="0 0 12.2 12.2" style="left:0.9px;top:-0.2px;"><circle cx="6.100" cy="6.100" r="5.600" fill="#fff100" stroke="#0c0f08" stroke-width=".9"/></svg></span></div><div class="c " style="left:776px;width:75px"><span class="t"><span class="l"><span style="letter-spacing:0.01px">-</span></span></span></div><div class="c " style="left:851px;width:76px"><span class="t"><span class="l"><span style="letter-spacing:0.01px">-</span></span></span></div><div class="c " style="left:927px;width:87px"><span class="t"><span class="l"><span style="letter-spacing:-0.18px">0.69</span></span></span></div><div class="c " style="left:1014px;width:125.70000000000005px"><span class="ei s"><svg class="ic" width="11.6" height="11.6" viewBox="0 0 11.6 11.6" style="left:1.1px;top:-0.5px;"><rect x=".6" y=".6" width="10.400" height="10.400" rx=".6" fill="#0078d7" stroke="#06080c" stroke-width="1.100"/><rect x="3.900" y="2.900" width="1" height="5.700" fill="#a5d1f3"/><rect x="6.900" y="2.900" width="1" height="5.700" fill="#a5d1f3"/></svg></span><span class="t"><span class="l"><span style="letter-spacing:0.00px">No</span><span style="letter-spacing:-0.61px"> </span><span style="letter-spacing:-0.02px">Price</span><span style="letter-spacing:-0.61px"> </span><span style="letter-spacing:-0.01px">Data</span></span></span></div><div class="c " style="left:1139.7px;width:233.89999999999986px"><span class="t k">실시간 가격<span class="l"><span style="letter-spacing:-0.15px">(5.94)</span></span> 볼린저 상단<span class="l"><span style="letter-spacing:-0.15px">(5.90)</span></span> 터치</span></div><div class="c " style="left:1373.6px;width:158.9000000000001px"><span class="t"><span class="l"><span style="letter-spacing:-0.17px">2025-08-09</span><span style="letter-spacing:-0.61px"> </span><span style="letter-spacing:-0.18px">23:58:02</span><span style="letter-spacing:-0.61px"> </span><span style="letter-spacing:-0.56px">KST</span></span></span></div></div>
<div class="tr" style="top:262.85px"><div class="c " style="left:0px;width:84px"><span class="t"><span class="l"><span style="letter-spacing:-0.69px">ALGM</span></span></span></div><div class="c " style="left:84px;width:170px"><span class="ei"><svg class="ic" width="11" height="11.1" viewBox="0 0 11 11.1" style="left:0.9px;top:0.1px;"><rect x="0" y="0" width="11" height="11.100" rx=".9" fill="#10120c"/><rect x=".8" y=".9" width="9.500" height="9.500" fill="#f4f4f4"/><path d="M.8 2.700l1.700 1.200 1.600-1 6.200 5.900" fill="none" stroke="#2b8de3" stroke-width="1.050" stroke-linejoin="round"/></svg></span><span class="t k k1">실시간 <span class="l"><span style="letter-spacing:-0.65px">RSI</span></span> 과매도</span></div><div class="c " style="left:254px;width:104px"><span class="t"><span class="l"><span style="letter-spacing:-0.19px">$30.77</span></span></span></div><div class="c " style="left:358px;width:107px"><span class="t"><span class="l"><span style="letter-spacing:-0.19px">$30.77</span></span></span></div><div class="c " style="left:465px;width:107.5px"><span class="t"><span class="l"><span style="letter-spacing:-0.19px">$0.00</span></span></span></div><div class="c " style="left:572.5px;width:96.5px"><span class="t"><span class="l"><span style="letter-spacing:-0.15px">0.00%</span></span></span></div><div class="c " style="left:669px;width:107px"><span class="ei p"><svg class="ic" width="12.2" height="12.2" viewBox="0 0 12.2 12.2" style="left:0.9px;top:-0.2px;"><circle cx="6.100" cy="6.100" r="5.600" fill="#fff100" stroke="#0c0f08" stroke-width=".9"/></svg></span></div><div class="c " style="left:776px;width:75px"><span class="t"><span class="l"><span style="letter-spacing:-0.18px">20.3</span></span></span></div><div class="c " style="left:851px;width:76px"><span class="t"><span class="l"><span style="letter-spacing:0.01px">-</span></span></span></div><div class="c " style="left:927px;width:87px"><span class="t"><span class="l"><span style="letter-spacing:-0.18px">9.70</span></span></span></div><div class="c " style="left:1014px;width:125.70000000000005px"><span class="ei s"><svg class="ic" width="11.6" height="11.6" viewBox="0 0 11.6 11.6" style="left:1.1px;top:-0.5px;"><rect x=".6" y=".6" width="10.400" height="10.400" rx=".6" fill="#0078d7" stroke="#06080c" stroke-width="1.100"/><rect x="3.900" y="2.900" width="1" height="5.700" fill="#a5d1f3"/><rect x="6.900" y="2.900" width="1" height="5.700" fill="#a5d1f3"/></svg></span><span class="t"><span class="l"><span style="letter-spacing:0.00px">No</span><span style="letter-spacing:-0.61px"> </span><span style="letter-spacing:-0.02px">Price</span><span style="letter-spacing:-0.61px"> </span><span style="letter-spacing:-0.01px">Data</span></span></span></div><div class="c " style="left:1139.7px;width:233.89999999999986px"><span class="t k">실시간 <span class="l"><span style="letter-spacing:-0.31px">RSI(20.3)</span><span style="letter-spacing:-0.61px"> </span><span style="letter-spacing:-0.48px">&lt;</span><span style="letter-spacing:-0.61px"> </span><span style="letter-spacing:-0.21px">30</span></span> 조건 충족</span></div><div class="c " style="left:1373.6px;width:158.9000000000001px"><span class="t"><span class="l"><span style="letter-spacing:-0.17px">2025-08-10</span><span style="letter-spacing:-0.61px"> </span><span style="letter-spacing:-0.18px">10:51:31</span><span style="letter-spacing:-0.61px"> </span><span style="letter-spacing:-0.56px">KST</span></span></span></div></div>
<div class="tr" style="top:289.1px"><div class="c " style="left:0px;width:84px"><span class="t"><span class="l"><span style="letter-spacing:-0.71px">ALDX</span></span></span></div><div class="c " style="left:84px;width:170px"><span class="ei"><svg class="ic" width="12.2" height="12.2" viewBox="0 0 12.2 12.2" style="left:0.9px;top:0px;"><circle cx="6.100" cy="6.100" r="5.600" fill="#e81224" stroke="#0c0f08" stroke-width=".9"/></svg></span><span class="t k k2">실시간 볼린저 상단 터치</span></div><div class="c " style="left:254px;width:104px"><span class="t"><span class="l"><span style="letter-spacing:-0.19px">$5.12</span></span></span></div><div class="c " style="left:358px;width:107px"><span class="t"><span class="l"><span style="letter-spacing:-0.19px">$5.12</span></span></span></div><div class="c " style="left:465px;width:107.5px"><span class="t"><span class="l"><span style="letter-spacing:-0.19px">$0.00</span></span></span></div><div class="c " style="left:572.5px;width:96.5px"><span class="t"><span class="l"><span style="letter-spacing:-0.15px">0.00%</span></span></span></div><div class="c " style="left:669px;width:107px"><span class="ei p"><svg class="ic" width="12.2" height="12.2" viewBox="0 0 12.2 12.2" style="left:0.9px;top:-0.2px;"><circle cx="6.100" cy="6.100" r="5.600" fill="#fff100" stroke="#0c0f08" stroke-width=".9"/></svg></span></div><div class="c " style="left:776px;width:75px"><span class="t"><span class="l"><span style="letter-spacing:0.01px">-</span></span></span></div><div class="c " style="left:851px;width:76px"><span class="t"><span class="l"><span style="letter-spacing:0.01px">-</span></span></span></div><div class="c " style="left:927px;width:87px"><span class="t"><span class="l"><span style="letter-spacing:-0.18px">0.21</span></span></span></div><div class="c " style="left:1014px;width:125.70000000000005px"><span class="ei s"><svg class="ic" width="11.6" height="11.6" viewBox="0 0 11.6 11.6" style="left:1.1px;top:-0.5px;"><rect x=".6" y=".6" width="10.400" height="10.400" rx=".6" fill="#0078d7" stroke="#06080c" stroke-width="1.100"/><rect x="3.900" y="2.900" width="1" height="5.700" fill="#a5d1f3"/><rect x="6.900" y="2.900" width="1" height="5.700" fill="#a5d1f3"/></svg></span><span class="t"><span class="l"><span style="letter-spacing:0.00px">No</span><span style="letter-spacing:-0.61px"> </span><span style="letter-spacing:-0.02px">Price</span><span style="letter-spacing:-0.61px"> </span><span style="letter-spacing:-0.01px">Data</span></span></span></div><div class="c " style="left:1139.7px;width:233.89999999999986px"><span class="t k">실시간 가격<span class="l"><span style="letter-spacing:-0.15px">(5.12)</span></span> 볼린저 상단<span class="l"><span style="letter-spacing:-0.15px">(5.10)</span></span> 터치</span></div><div class="c " style="left:1373.6px;width:158.9000000000001px"><span class="t"><span class="l"><span style="letter-spacing:-0.17px">2025-08-09</span><span style="letter-spacing:-0.61px"> </span><span style="letter-spacing:-0.18px">23:58:02</span><span style="letter-spacing:-0.61px"> </span><span style="letter-spacing:-0.56px">KST</span></span></span></div></div>
<div id="vs"><i class="au"></i><div class="thumb"></div><i class="ad"></i></div>
</div></div>

<svg class="at" width="19.36" height="19.536" viewBox="0 0 11 11.1" style="left:63.8px;top:946.7px"><rect x="0" y="0" width="11" height="11.100" rx=".9" fill="#06080c"/><rect x=".8" y=".9" width="9.600" height="9.500" fill="#f4f4f4"/><rect x="1.300" y="3.400" width="1.900" height="7" fill="#16c60c"/><rect x="4.500" y="5.200" width="1.900" height="5.200" fill="#f25530"/><rect x="7.900" y="2.200" width="1.800" height="8.200" fill="#0a78dc"/></svg>
<h3 style="left:91.400px;top:943.500px">신호별 성과 차트</h3>

<div class="wm" style="left:1256px;top:856.600px;font-size:20px;line-height:28px;word-spacing:5.600px"><span class="l" style="letter-spacing:-.3px">Windows</span> 정품 인증</div>
<div class="wm" style="left:1253.500px;top:882.400px;font-size:15.500px;line-height:22px;word-spacing:1px;letter-spacing:.36px"><span class="l">[</span>설정<span class="l">]</span>으로 이동하여 <span class="l">Windows</span>를 정품 인증합니다<span class="l">.</span></div>

</body></html>
